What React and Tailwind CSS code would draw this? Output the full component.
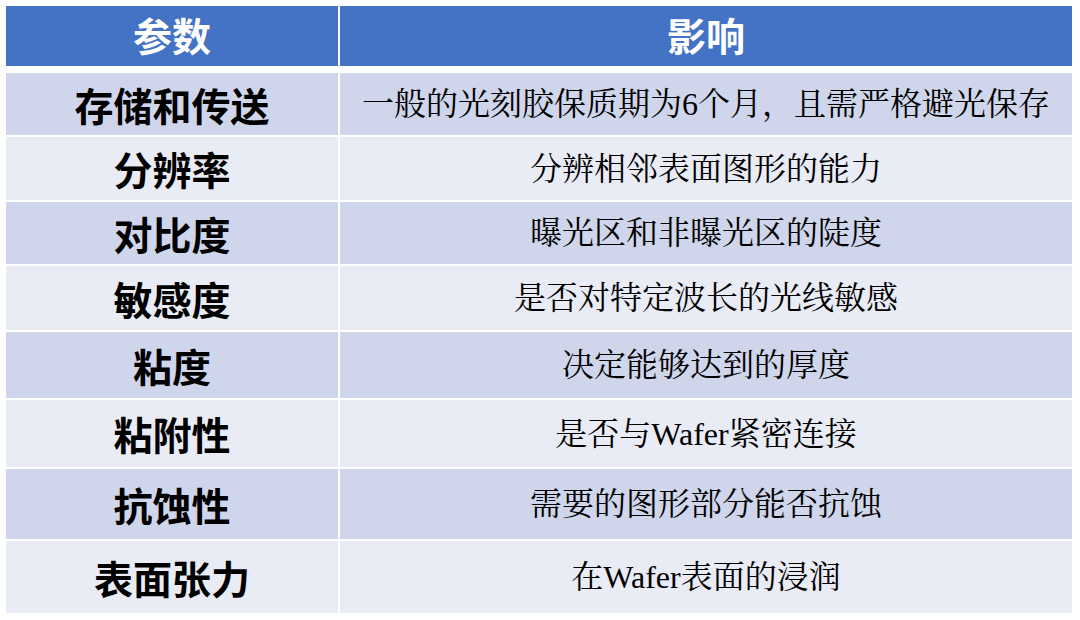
const rows = [
  { name: '存储和传送', desc: '一般的光刻胶保质期为6个月，且需严格避光保存', h: 'h-[62px]', bg: 'bg-[#cfd5ea]' },
  { name: '分辨率', desc: '分辨相邻表面图形的能力', h: 'h-[63px]', bg: 'bg-[#e9ebf5]' },
  { name: '对比度', desc: '曝光区和非曝光区的陡度', h: 'h-[62px]', bg: 'bg-[#cfd5ea]' },
  { name: '敏感度', desc: '是否对特定波长的光线敏感', h: 'h-[64px]', bg: 'bg-[#e9ebf5]' },
  { name: '粘度', desc: '决定能够达到的厚度', h: 'h-[66px]', bg: 'bg-[#cfd5ea]' },
  { name: '粘附性', desc: '是否与Wafer紧密连接', h: 'h-[67px]', bg: 'bg-[#e9ebf5]' },
  { name: '抗蚀性', desc: '需要的图形部分能否抗蚀', h: 'h-[70px]', bg: 'bg-[#cfd5ea]' },
  { name: '表面张力', desc: '在Wafer表面的浸润', h: 'h-[72px]', bg: 'bg-[#e9ebf5]' },
];

const sans = 'font-[family-name:Noto_Sans_CJK_SC,sans-serif]';
const serif = 'font-[family-name:Liberation_Serif,Noto_Serif_CJK_SC,Noto_Sans_CJK_SC,serif]';

export default function App() {
  return (
    <main className="w-[1080px] h-[620px] bg-white pt-[6px] pl-[6px]">
      <div className="flex flex-col w-[1066px]">
        {/* header */}
        <div className="flex h-[60px] gap-[2px] mb-[7px]">
          <div className={`w-[332px] bg-[#4472c4] flex items-center justify-center text-white text-[39px] font-bold leading-none pb-[3px] ${sans}`}>
            参数
          </div>
          <div className={`flex-1 bg-[#4472c4] flex items-center justify-center text-white text-[39px] font-bold leading-none pb-[3px] ${sans}`}>
            影响
          </div>
        </div>

        <div className="flex flex-col gap-[2px]">
          {rows.map((r) => (
            <div key={r.name} className={`flex gap-[2px] ${r.h}`}>
              <div className={`w-[332px] ${r.bg} flex items-center justify-center text-black text-[39px] font-bold leading-none ${sans}`}>
                {r.name}
              </div>
              <div className={`flex-1 ${r.bg} flex items-center justify-center text-black text-[32px] leading-none ${serif}`}>
                {r.desc}
              </div>
            </div>
          ))}
        </div>
      </div>
    </main>
  );
}
